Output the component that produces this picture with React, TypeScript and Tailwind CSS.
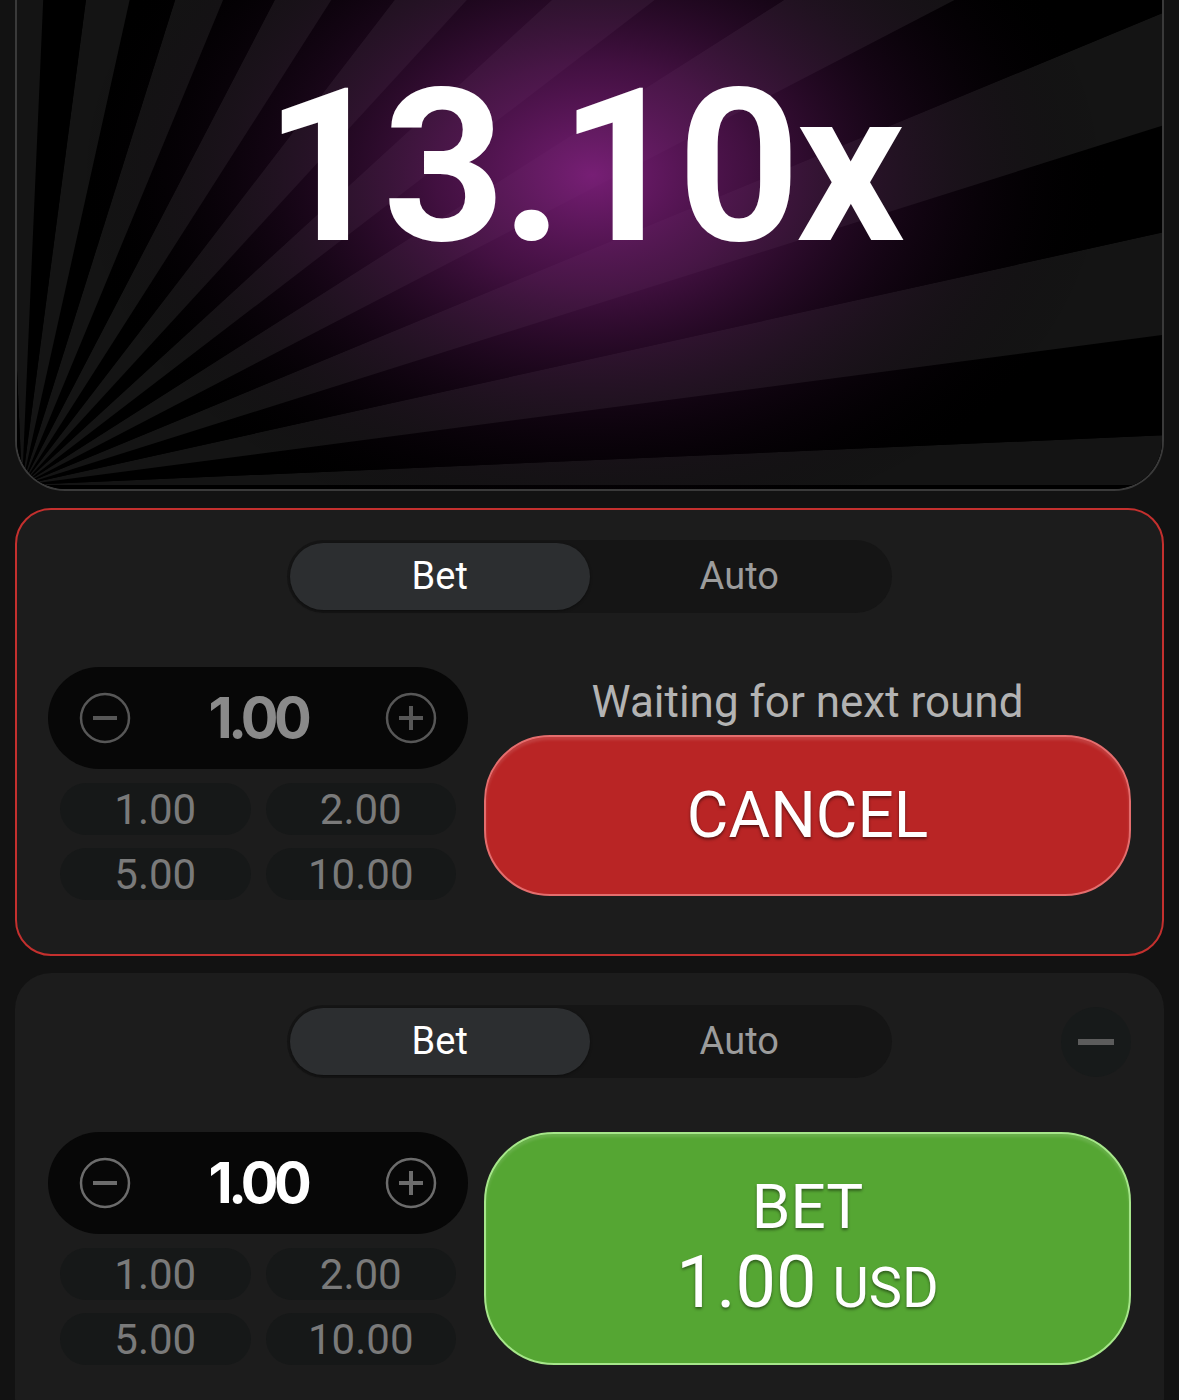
import React from "react";

function Rays() {
  const ox = 5;
  const oy = 485;
  const R = 2000;
  const wedges: { a0: number; a1: number; fill: string }[] = [];
  const bounds = [0];
  for (let a = 2.5; a < 95; a += 5) bounds.push(a);
  bounds.push(95);
  for (let i = 0; i < bounds.length - 1; i++) {
    wedges.push({ a0: bounds[i], a1: bounds[i + 1], fill: i % 2 === 0 ? "#141414" : "#000000" });
  }
  const pt = (a: number) => {
    const r = (a * Math.PI) / 180;
    return `${ox + R * Math.cos(r)},${oy - R * Math.sin(r)}`;
  };
  return (
    <svg className="absolute inset-0 h-full w-full" viewBox="0 0 1144 489" preserveAspectRatio="none">
      <defs>
        <radialGradient
          id="glow"
          cx="575"
          cy="175"
          r="520"
          gradientUnits="userSpaceOnUse"
          gradientTransform="translate(575 175) scale(1 0.72) translate(-575 -175)"
        >
          <stop offset="0" stopColor="#7c1f7a" stopOpacity="0.95" />
          <stop offset="0.3" stopColor="#5e175c" stopOpacity="0.7" />
          <stop offset="0.6" stopColor="#3a0e3a" stopOpacity="0.35" />
          <stop offset="1" stopColor="#000" stopOpacity="0" />
        </radialGradient>
      </defs>
      <rect x="0" y="0" width="1144" height="489" fill="#000" />
      {wedges.map((w, i) => (
        <polygon key={i} points={`${ox},${oy} ${pt(w.a0)} ${pt(w.a1)}`} fill={w.fill} />
      ))}
      <rect x="0" y="0" width="1144" height="489" fill="url(#glow)" />
    </svg>
  );
}

function CircleIcon({ plus, color }: { plus?: boolean; color: string }) {
  return (
    <svg width="52" height="52" viewBox="0 0 52 52" fill="none">
      <circle cx="26" cy="26" r="24" stroke={color} strokeWidth="2.5" />
      <line x1="14" y1="26" x2="38" y2="26" stroke={color} strokeWidth="4" />
      {plus && <line x1="26" y1="14" x2="26" y2="38" stroke={color} strokeWidth="4" />}
    </svg>
  );
}

function Tabs() {
  return (
    <div className="mx-auto grid h-[73px] w-[605px] grid-cols-2 rounded-full bg-[#151515] p-[3px]">
      <div className="flex items-center justify-center rounded-full bg-[#2c2e30] text-[38px] text-white shadow-[0_1px_3px_rgba(0,0,0,0.4)]">
        Bet
      </div>
      <div className="flex items-center justify-center text-[38px] text-[#9c9c9c]">Auto</div>
    </div>
  );
}

function AmountColumn({ active }: { active: boolean }) {
  const iconColor = active ? "#6c6c6c" : "#575757";
  return (
    <div className="flex w-[420px] shrink-0 flex-col">
      <div className="flex h-[102px] items-center justify-between rounded-full bg-[#070707] px-[31px]">
        <CircleIcon color={iconColor} />
        <span
          className={`font-[Inter,sans-serif] text-[56px] font-bold tracking-[-0.08em] ${
            active ? "text-white" : "text-[#8a8a8a]"
          }`}
        >
          1.00
        </span>
        <CircleIcon plus color={iconColor} />
      </div>
      <div className="mt-[14px] grid grid-cols-2 gap-x-[15px] gap-y-[13px] px-[12px]">
        {["1.00", "2.00", "5.00", "10.00"].map((v) => (
          <div
            key={v}
            className="flex h-[52px] items-center justify-center rounded-full bg-[#161818] text-[42px] text-[#7a7a7a]"
          >
            {v}
          </div>
        ))}
      </div>
    </div>
  );
}

export default function App() {
  return (
    <div className="flex h-[1400px] w-[1179px] flex-col gap-[17px] overflow-hidden bg-[#121212] px-[15px] font-[Roboto,'Noto_Sans',sans-serif]">
      {/* Game area */}
      <div className="relative h-[491px] shrink-0 overflow-hidden rounded-b-[50px] border-x-2 border-b-2 border-[#3a3a3a] bg-black">
        <Rays />
        <div className="relative flex justify-center pr-[14px] pt-[60px]">
          <span className="text-[214px] font-bold leading-none tracking-[-0.02em] text-white">13.10x</span>
        </div>
      </div>

      {/* Panel 1 */}
      <div className="h-[448px] shrink-0 rounded-[36px] border-2 border-[#c4302e] bg-[#1c1c1c] px-[31px] pt-[30px]">
        <Tabs />
        <div className="mt-[54px] flex gap-[16px]">
          <AmountColumn active={false} />
          <div className="flex flex-1 flex-col">
            <div className="mt-[10px] h-[50px] text-center text-[44px] leading-[50px] text-[#b3b3b3]">
              Waiting for next round
            </div>
            <button className="mt-[8px] flex h-[161px] w-full items-center justify-center rounded-[66px] border-2 border-[#e46d6d] bg-[#b92525] text-[64px] text-white [text-shadow:0_2px_3px_rgba(0,0,0,0.5)] shadow-[inset_0_3px_3px_rgba(255,255,255,0.12)]">
              CANCEL
            </button>
          </div>
        </div>
      </div>

      {/* Panel 2 */}
      <div className="relative h-[460px] shrink-0 rounded-[36px] bg-[#1c1c1c] px-[33px] pt-[32px]">
        <Tabs />
        <div className="absolute right-[33px] top-[34px] flex h-[70px] w-[70px] items-center justify-center rounded-full bg-[#171a1a]">
          <div className="h-[6px] w-[36px] bg-[#5c5c5c]" />
        </div>
        <div className="mt-[54px] flex gap-[16px]">
          <AmountColumn active />
          <button className="flex h-[233px] flex-1 flex-col items-center justify-center rounded-[70px] border-2 border-[#a6e68a] bg-[#55a633] pt-[20px] text-white [text-shadow:0_2px_3px_rgba(0,0,0,0.45)] shadow-[inset_0_3px_3px_rgba(255,255,255,0.12)]">
            <span className="text-[62px] leading-[64px]">BET</span>
            <span className="mt-[4px] leading-[80px]">
              <span className="text-[72px]">1.00</span>
              <span className="ml-[16px] text-[56px]">USD</span>
            </span>
          </button>
        </div>
      </div>
    </div>
  );
}
